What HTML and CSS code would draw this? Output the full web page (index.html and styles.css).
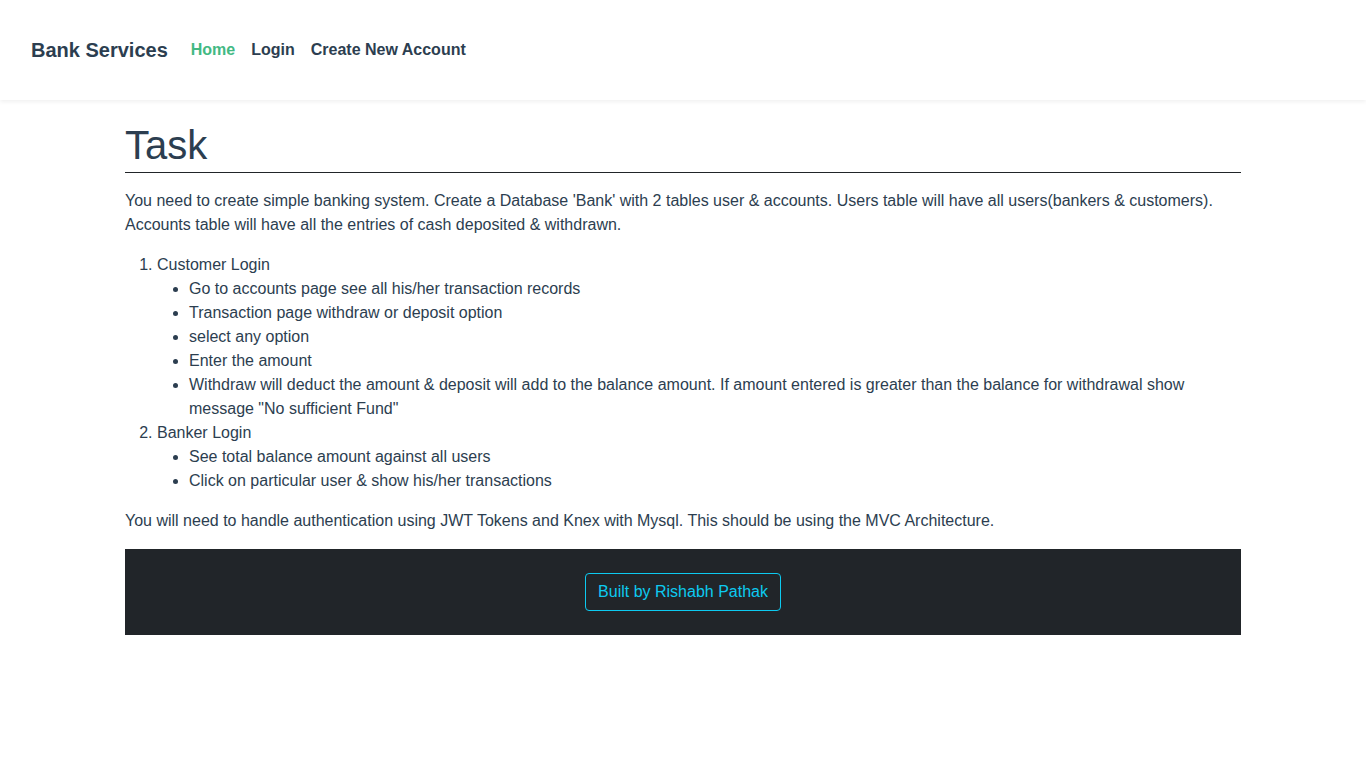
FILE: index.html
```html
<!DOCTYPE html>
<html lang="en">
<head>
<meta charset="utf-8">
<title>Bank Services</title>
<link rel="stylesheet" href="styles.css">
</head>
<body>
<div class="app">
  <nav class="navbar">
    <a class="brand" href="#">Bank Services</a>
    <ul class="nav">
      <li><a class="nav-link active" href="#">Home</a></li>
      <li><a class="nav-link" href="#">Login</a></li>
      <li><a class="nav-link" href="#">Create New Account</a></li>
    </ul>
  </nav>
  <main class="container">
    <h1 class="title">Task</h1>
    <p>You need to create simple banking system. Create a Database 'Bank' with 2 tables user &amp; accounts. Users table will have all users(bankers &amp; customers). Accounts table will have all the entries of cash deposited &amp; withdrawn.</p>
    <ol class="tasks">
      <li>Customer Login
        <ul>
          <li>Go to accounts page see all his/her transaction records</li>
          <li>Transaction page withdraw or deposit option</li>
          <li>select any option</li>
          <li>Enter the amount</li>
          <li>Withdraw will deduct the amount &amp; deposit will add to the balance amount. If amount entered is greater than the balance for withdrawal show message "No sufficient Fund"</li>
        </ul>
      </li>
      <li>Banker Login
        <ul>
          <li>See total balance amount against all users</li>
          <li>Click on particular user &amp; show his/her transactions</li>
        </ul>
      </li>
    </ol>
    <p>You will need to handle authentication using JWT Tokens and Knex with Mysql. This should be using the MVC Architecture.</p>
    <footer class="footer">
      <a class="btn-info" href="#">Built by Rishabh Pathak</a>
    </footer>
  </main>
</div>
</body>
</html>
```
FILE: styles.css
```css
* { box-sizing: border-box; }
html, body { margin: 0; padding: 0; }
body {
  font-family: "Liberation Sans", Arial, sans-serif;
  font-size: 16px;
  line-height: 1.5;
  color: #2c3e50;
  background: #fff;
}
a { text-decoration: none; }
.navbar {
  height: 100px;
  display: flex;
  align-items: center;
  padding: 0 31px;
  background: #fff;
  box-shadow: 0 2px 4px rgba(0,0,0,0.06);
}
.brand {
  font-size: 20px;
  font-weight: 700;
  color: #2c3e50;
  margin-right: 15px;
}
.nav {
  display: flex;
  list-style: none;
  margin: 0;
  padding: 0;
}
.nav-link {
  display: block;
  padding: 8px;
  font-weight: 700;
  color: #2c3e50;
}
.nav-link.active { color: #42b983; }
.container {
  max-width: 1140px;
  margin: 0 auto;
  padding: 0 12px;
}
.title {
  font-size: 40px;
  font-weight: 400;
  line-height: 1.2;
  margin: 21px 0 16px;
  padding-bottom: 3px;
  border-bottom: 1px solid #212529;
}
p { margin: 0 0 16px; }
.tasks {
  margin: 0 0 16px;
  padding-left: 32px;
}
.tasks ul {
  margin: 0;
  padding-left: 32px;
  list-style-type: disc;
}
.footer {
  background: #212529;
  padding: 24px 0;
  display: flex;
  justify-content: center;
  margin-top: 16px;
}
.btn-info {
  display: inline-block;
  padding: 6px 12px;
  border: 1px solid #0dcaf0;
  border-radius: 4px;
  color: #0dcaf0;
  font-size: 16px;
  line-height: 24px;
}
```
